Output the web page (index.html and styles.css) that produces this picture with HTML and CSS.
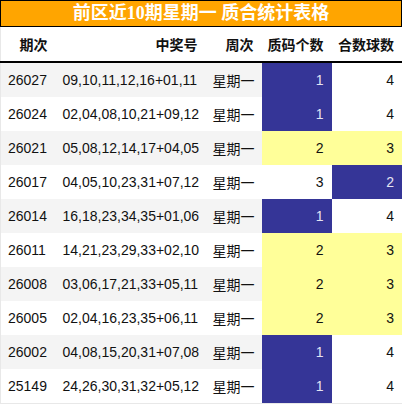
FILE: index.html
```html
<!DOCTYPE html>
<html>
<head>
<meta charset="utf-8">
<link rel="stylesheet" href="styles.css">
</head>
<body>
<div class="wrap">
  <div class="title">前区近10期星期一 质合统计表格</div>
  <table class="grid">
    <colgroup>
      <col class="c1"><col class="c2"><col class="c3"><col class="c4"><col class="c5">
    </colgroup>
    <thead>
      <tr><th>期次</th><th>中奖号</th><th>周次</th><th>质码个数</th><th>合数球数</th></tr>
    </thead>
    <tbody>
      <tr class="odd"><td class="t">26027</td><td class="t">09,10,11,12,16+01,11</td><td class="t">星期一</td><td class="n blue">1</td><td class="n w">4</td></tr>
      <tr><td class="t">26024</td><td class="t">02,04,08,10,21+09,12</td><td class="t">星期一</td><td class="n blue">1</td><td class="n w">4</td></tr>
      <tr class="odd"><td class="t">26021</td><td class="t">05,08,12,14,17+04,05</td><td class="t">星期一</td><td class="n yel">2</td><td class="n yel">3</td></tr>
      <tr><td class="t">26017</td><td class="t">04,05,10,23,31+07,12</td><td class="t">星期一</td><td class="n w">3</td><td class="n blue">2</td></tr>
      <tr class="odd"><td class="t">26014</td><td class="t">16,18,23,34,35+01,06</td><td class="t">星期一</td><td class="n blue">1</td><td class="n w">4</td></tr>
      <tr><td class="t">26011</td><td class="t">14,21,23,29,33+02,10</td><td class="t">星期一</td><td class="n yel">2</td><td class="n yel">3</td></tr>
      <tr class="odd"><td class="t">26008</td><td class="t">03,06,17,21,33+05,11</td><td class="t">星期一</td><td class="n yel">2</td><td class="n yel">3</td></tr>
      <tr><td class="t">26005</td><td class="t">02,04,16,23,35+06,11</td><td class="t">星期一</td><td class="n yel">2</td><td class="n yel">3</td></tr>
      <tr class="odd"><td class="t">26002</td><td class="t">04,08,15,20,31+07,08</td><td class="t">星期一</td><td class="n blue">1</td><td class="n w">4</td></tr>
      <tr><td class="t">25149</td><td class="t">24,26,30,31,32+05,12</td><td class="t">星期一</td><td class="n blue">1</td><td class="n w">4</td></tr>
    </tbody>
  </table>
</div>
</body>
</html>
```
FILE: styles.css
```css
html, body {
  margin: 0;
  padding: 0;
  background: #ffffff;
}
body {
  font-family: "Liberation Sans", "Noto Sans CJK SC", sans-serif;
  color: #111111;
}
.wrap {
  width: 402px;
}
.title {
  height: 25px;
  line-height: 25px;
  background: #ffa500;
  border: 1px solid #000000;
  color: #ffffff;
  font-family: "Liberation Serif", "Noto Sans CJK SC", serif;
  font-weight: bold;
  font-size: 18px;
  text-align: center;
}
.grid {
  width: 402px;
  border-collapse: collapse;
  table-layout: fixed;
  font-size: 14px;
  border-left: 1px solid #e8e8e8;
  border-right: 1px solid #e8e8e8;
  border-bottom: 1px solid #e8e8e8;
}
.c1 { width: 55px; }
.c2 { width: 150px; }
.c3 { width: 56px; }
.c4 { width: 70px; }
.c5 { width: 71px; }
.grid th {
  height: 34px;
  padding: 0 8px 0 0;
  text-align: right;
  font-weight: bold;
  font-size: 14px;
  white-space: nowrap;
  color: #111111;
  border-bottom: 2px solid #000000;
  background: #ffffff;
}
.grid td {
  height: 34px;
  padding: 0 8px 0 7px;
  white-space: nowrap;
}
.grid tr.odd td {
  background: #f4f4f4;
}
.grid td.t {
  text-align: left;
}
.grid td.n {
  text-align: right;
}
.grid tr td.w {
  background: #ffffff;
}
.grid tr td.blue {
  background: #353597;
  color: #e4e4f2;
}
.grid tr td.yel {
  background: #ffff99;
}
```
